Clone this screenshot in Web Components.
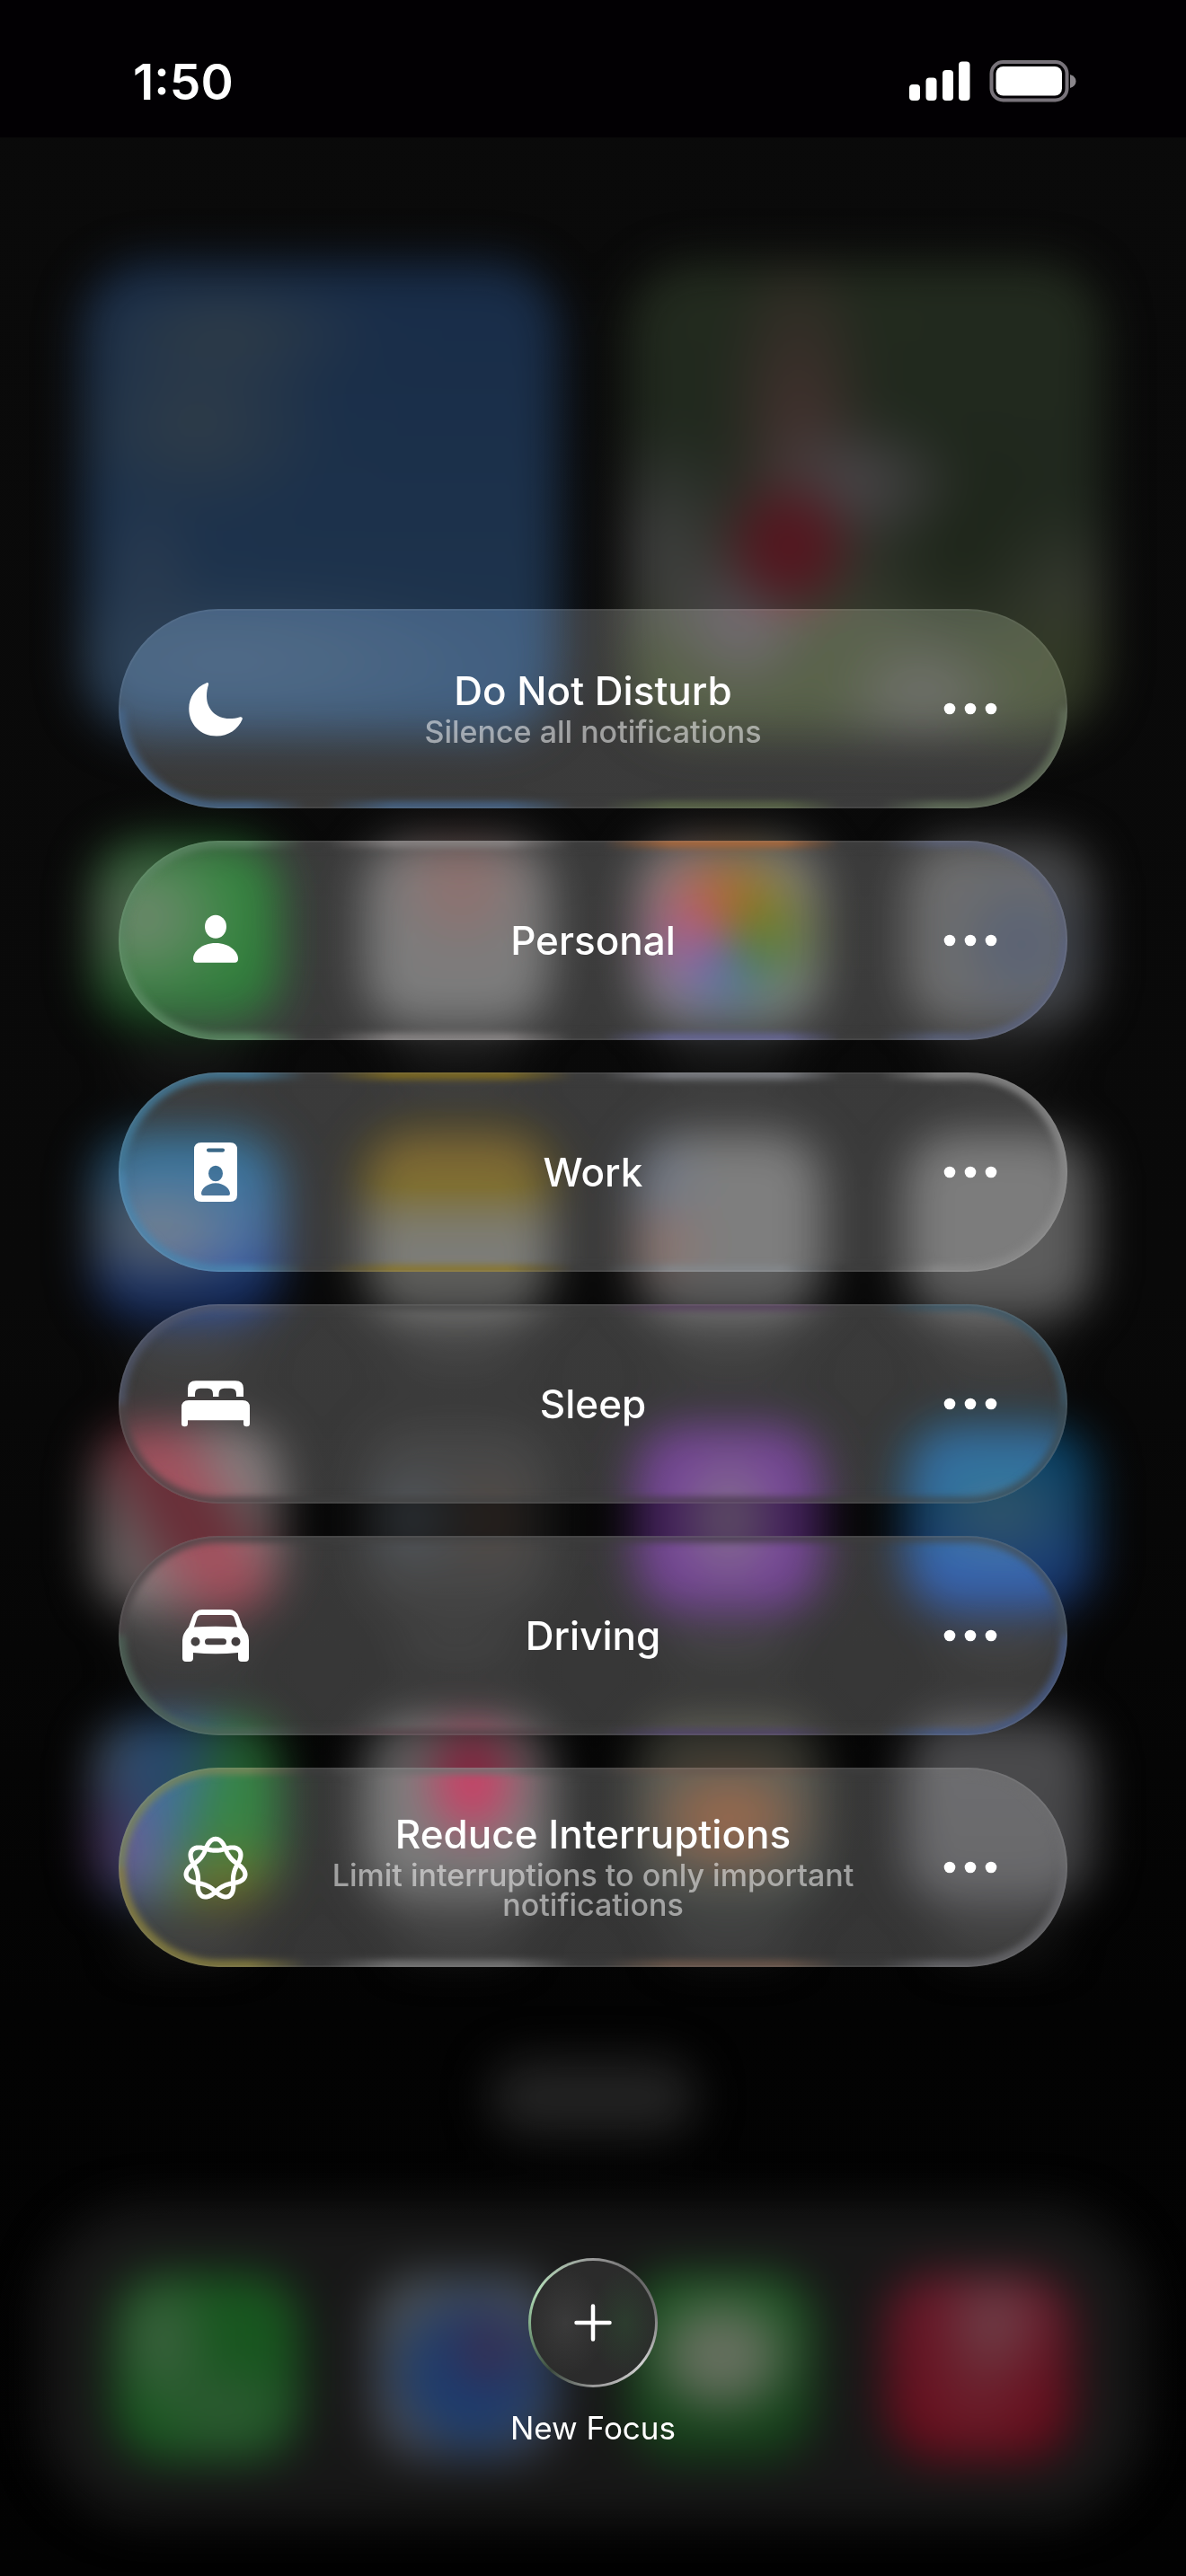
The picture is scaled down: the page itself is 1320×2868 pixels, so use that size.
<!DOCTYPE html>
<html lang="en">
<head>
<meta charset="utf-8">
<meta name="viewport" content="width=device-width, initial-scale=1">
<title>Focus</title>
<style>
  :root {
    --font: Inter, "Liberation Sans", sans-serif;
    --ink: #fff;
    --muted: rgba(255, 255, 255, 0.52);
    --bar: #020003;
    --inset: 10%;
  }
  * { box-sizing: border-box; }
  body {
    margin: 0; color: var(--ink); font-family: var(--font);
    background: linear-gradient(#0a0a0a 0, #090909 50%, #030303 78%, #020202 100%);
  }
</style>
</head>
<body>
<focus-screen>
  <home-backdrop slot="backdrop"></home-backdrop>
  <status-bar slot="status" time="1:50"></status-bar>
  <focus-mode icon="moon" label="Do Not Disturb" rim="dnd">Silence all notifications</focus-mode>
  <focus-mode icon="person" label="Personal" rim="personal"></focus-mode>
  <focus-mode icon="badge" label="Work" rim="work"></focus-mode>
  <focus-mode icon="bed" label="Sleep" rim="sleep"></focus-mode>
  <focus-mode icon="car" label="Driving" rim="driving"></focus-mode>
  <focus-mode icon="knot" label="Reduce Interruptions" rim="reduce">Limit interruptions to only important notifications</focus-mode>
  <new-focus slot="footer">New Focus</new-focus>
</focus-screen>

<script>
// All icons share one 84x84 box with the origin in the middle.
const ICONS = {
  moon: `<path d="M-10.5-28.6C-8.6-29.6-7.4-28.6-8-26.5C-9.2-23-10-19-10-14C-10 1 1 11 15 11C20 11 23 10.4 26.5 9.4C29 8.7 30.4 10 29.6 12C25 23 14 30.5 1 30.5C-17 30.5-29.7 17.5-29.7 0C-29.7-13-22-24-10.5-28.6Z"/>`,
  person: `<ellipse cy="-15.3" rx="12" ry="13"/><path d="M-21 24.7C-24 24.7-25 23-25 20.5C-25 13-16 3 0 3C16 3 25 13 25 20.5C25 23 24 24.7 21 24.7Z"/>`,
  badge: `<path fill-rule="evenodd" d="M-16-33H16Q24-33 24-25V25Q24 33 16 33H-16Q-24 33-24 25V-25Q-24-33-16-33ZM-8-26.5A2 2 0 0 0-8-22.3H8A2 2 0 0 0 8-26.5ZM0-7.2A8 8.7 0 1 0 0 10.2A8 8.7 0 1 0 0-7.2ZM-14 26H14Q16 26 16 24C16 19 10 12.3 0 12.3C-10 12.3-16 19-16 24Q-16 26-14 26Z"/>`,
  bed: `<path d="M-31-8V-17Q-31-25.7-22-25.7H22Q31-25.7 31-17V-8H23V-11Q23-17.3 17-17.3H9.5Q3.5-17.3 3.5-11V-8H-3V-11Q-3-17.3-9-17.3H-17Q-23-17.3-23-11V-8Z"/><path d="M-38 4Q-38-4-30-4H30Q38-4 38 4V22Q38 25.3 34.5 25.3Q31 25.3 31 22V18.3H-31V22Q-31 25.3-34.5 25.3Q-38 25.3-38 22Z"/>`,
  car: `<path fill-rule="evenodd" d="M-30-9.5L-26-20.5Q-23-29-15-29H15Q23-29 26-20.5L30-9.5Q37-2 37 5V25Q37 29 33 29H29Q25 29 25 25V19Q0 21.5-25 19V25Q-25 29-29 29H-33Q-37 29-37 25V5Q-37-2-30-9.5ZM-24-9.5Q0-11 24-9.5L21-19Q20-23 16-23H-16Q-20-23-21-19ZM-22.5 1.7A5 5 0 1 0-22.5 11.7A5 5 0 1 0-22.5 1.7ZM22.5 1.7A5 5 0 1 0 22.5 11.7A5 5 0 1 0 22.5 1.7ZM-8.5 3.2A3.5 3.5 0 0 0-8.5 10.2H8.5A3.5 3.5 0 0 0 8.5 3.2Z"/>`,
  knot: `<path fill="none" stroke="currentColor" stroke-width="5.2" stroke-linejoin="round" d="${knot(26.2, 6.4, 1, 2)}"/>`,
};

// Seven-lobed knot: the radius swings 7 times while the pen goes round twice.
function knot(radius, swing, pinch, cy) {
  const points = [];
  for (let i = 0; i < 280; i++) {
    const a = (i / 280) * Math.PI * 4;
    const r = radius + swing * Math.cos(3.5 * a) + pinch * Math.cos(7 * a);
    points.push(`${(r * Math.sin(a)).toFixed(2)} ${(cy - r * Math.cos(a)).toFixed(2)}`);
  }
  return `M${points.join("L")}Z`;
}

// Light bent round the edge of each glass card: [top, bottom], four icon columns each.
const RIMS = {
  dnd: [null, ["#46678c", "#46678c", "#5c6a48", "#62705a"]],
  personal: [["#5b8663", "#8a8686", "#b06a3a", "#5c6278"], ["#5a8a62", "#8e8a8a", "#6a6a9c", "#5c6480"]],
  work: [["#437c9c", "#86701e", "#84868c", "#8c8c8c"], ["#4a86ae", "#8a7628", "#84888c", "#8a8a8a"]],
  sleep: [["#50566a", "#484848", "#55405c", "#3c5868"], ["#4c4446", "#444", "#4c3c52", "#3c4e58"]],
  driving: [["#4c4648", "#444", "#483e4e", "#44505c"], ["#4e6458", "#55444a", "#50446a", "#465a86"]],
  reduce: [["#7a865a", "#707070", "#6a5a50", "#6c6c6e"], ["#8a8240", "#7c7c7c", "#705a4c", "#68686c"]],
};

function band(colors) {
  if (!colors) return "linear-gradient(transparent, transparent)";
  const [a, b, c, d] = colors;
  const glass = "#3d3d3d";
  return `linear-gradient(90deg, ${a} 14%, ${glass} 20% 22%, ${b} 29% 41%, ${glass} 48% 51%, ${c} 58% 70%, ${glass} 76% 80%, ${d} 86%)`;
}

function mount(el, html) {
  el.attachShadow({ mode: "open" }).innerHTML = `<style>*, *::before, *::after { box-sizing: border-box; }</style>${html}`;
}

class FocusScreen extends HTMLElement {
  connectedCallback() {
    mount(this, `
      <style>
        :host { display: flex; flex-direction: column; min-height: 100vh; position: relative; overflow: hidden; }
        main {
          display: flex; flex-direction: column; gap: 36px;
          padding: 525px var(--inset) 0;
        }
        footer { display: flex; justify-content: center; margin-top: auto; padding: 48px 0 140px; }
      </style>
      <slot name="backdrop"></slot>
      <slot name="status"></slot>
      <main><slot></slot></main>
      <footer><slot name="footer"></slot></footer>
    `);
  }
}

class StatusBar extends HTMLElement {
  connectedCallback() {
    mount(this, `
      <style>
        :host {
          display: flex; align-items: center; justify-content: space-between;
          height: 153px; padding: 28px 122px 0 148px;
          background: var(--bar); position: relative;
        }
        time { font-size: 55px; line-height: 64px; font-weight: 600; }
        svg { display: block; }
      </style>
      <time>${this.getAttribute("time")}</time>
      <svg width="186" height="48" viewBox="0 0 186 48" role="img" aria-label="Full signal, battery full">
        <g fill="#fff">
          <rect y="27" width="12" height="18" rx="4"/>
          <rect x="18.5" y="19.5" width="12" height="25.5" rx="4"/>
          <rect x="37" y="11" width="12" height="34" rx="4"/>
          <rect x="55" y="1.5" width="12.5" height="43.5" rx="4"/>
          <rect x="96.5" y="7" width="73.5" height="32.5" rx="8"/>
        </g>
        <rect x="91.5" y="2" width="84" height="42.5" rx="13" fill="none" stroke="#78737a" stroke-width="4"/>
        <path d="M179 16Q185.5 18 185.5 23.5Q185.5 29 179 31Z" fill="#8a868c"/>
      </svg>
    `);
  }
}

// The home screen seen out of focus behind the list. Purely decorative.
class HomeBackdrop extends HTMLElement {
  connectedCallback() {
    this.setAttribute("aria-hidden", "true");
    mount(this, `
      <style>
        :host { display: block; position: absolute; inset: 0; filter: blur(25px); }
        .page { padding: 292px 104px 0; }
        .widgets, .row, .dock { display: flex; justify-content: space-between; }
        .widgets { margin: 0 -12px; gap: 76px; }
        .widgets div { flex: 1; height: 527px; border-radius: 76px; }
        .row { margin-top: 116px; height: 286px; }
        .row + .row { margin-top: 40px; }
        .app::after {
          content: ""; display: block; width: 130px; height: 30px;
          margin: 24px auto 0; border-radius: 15px; background: #1c1c1c;
        }
        .app i, .dock i { display: block; width: 208px; height: 208px; border-radius: 56px; }
        .weather {
          background:
            radial-gradient(180px 70px at 30% 15%, #303d48, transparent),
            radial-gradient(160px 110px at 24% 34%, #303d48, transparent),
            radial-gradient(60px 100px at 14% 66%, #2c3c50, transparent),
            radial-gradient(340px 90px at 30% 84%, #33465a, transparent),
            linear-gradient(#182c48, #20364e);
        }
        .photo {
          background:
            radial-gradient(84px 84px at 34% 60%, #54161f 40%, transparent),
            radial-gradient(130px 80px at 48% 47%, #4c484c, transparent),
            radial-gradient(90px 230px at 36% 36%, #463230, transparent),
            radial-gradient(90px 90px at 24% 76%, #504a52, transparent),
            radial-gradient(110px 90px at 62% 92%, #50504e, transparent),
            radial-gradient(150px 140px at 2% 60%, #404040, transparent),
            radial-gradient(120px 160px at 70% 60%, #1c2418, transparent),
            linear-gradient(#222a1e 0, #20281e 50%, #363a30 70%, #323926 82%, #303726);
        }
        .facetime { background: radial-gradient(120px 100px at 26% 42%, #5c6a5a, transparent), linear-gradient(#1f5a27, #1c5824 70%, #184420); }
        .calendar { background: radial-gradient(80px 90px at 52% 22%, #6a4e4c, transparent), #5c5c5c; }
        .photos {
          background:
            radial-gradient(circle, transparent 50px, #606060 108px),
            conic-gradient(#7c4c18, #5c5812 55deg, #3a5818 105deg, #305450 150deg, #385078 190deg, #5a4478 225deg, #7c3c60 270deg, #883c38 315deg, #7c4c18);
        }
        .camera { background: radial-gradient(90px 96px at 62% 56%, #303848, transparent), #4a4a4a; }
        .mail { background: radial-gradient(120px 74px at 36% 54%, #60666c, transparent), linear-gradient(#20506a, #2a4a70 50%, #162f66 75%, #122a60); }
        .notes { background: linear-gradient(#544408 26%, #5c5c56 46%, #5e5e5e); }
        .reminders { background: radial-gradient(50px 60px at 14% 26%, #4e5664, transparent), radial-gradient(50px 50px at 16% 58%, #6c504a, transparent), #5e5e5e; }
        .contacts { background: #5c5c5c; }
        .news { background: linear-gradient(60deg, transparent 22%, #6a2c36 45% 58%, transparent 78%), #646060; }
        .stocks { background: radial-gradient(60px 60px at 25% 50%, #30363c, transparent), radial-gradient(50px 50px at 68% 50%, #30241e, transparent), #1a1a1a; }
        .podcasts { background: radial-gradient(64px 90px at 50% 50%, #665a68, transparent), #42205a; }
        .store { background: radial-gradient(100px 70px at 50% 46%, #385a6a, transparent), linear-gradient(#08466a, #0e3e66 45%, #1a3e76 70%, #18346c); }
        .maps {
          background:
            radial-gradient(100px 70px at 72% 94%, #544614, transparent),
            radial-gradient(80px 90px at 6% 70%, #4e305a, transparent),
            linear-gradient(105deg, #4c5460 8%, #28486c 22% 42%, #225c2c 62%, #245c2e);
        }
        .health { background: radial-gradient(60px 76px at 58% 34%, #86203c 45%, transparent), linear-gradient(#5e5e5e 60%, #4c4c4c); }
        .home { background: radial-gradient(100px 66px at 50% 54%, #6a4834 35%, transparent), linear-gradient(#3c3c34, #262a28); }
        .settings { background: linear-gradient(#4c4c4e, #424244); }
        .search { width: 230px; height: 84px; margin: 94px auto 0; border-radius: 42px; background: #222; }
        .dock { margin: 78px 46px 0; padding: 76px 80px 0; height: 352px; border-radius: 120px; background: #171717; }
        .phone { background: radial-gradient(60px 90px at 26% 36%, #446446, transparent), radial-gradient(100px 60px at 60% 74%, #325a36, transparent), #18561f; }
        .safari { background: radial-gradient(60px 60px at 62% 42%, #402a48, transparent), radial-gradient(circle at 55% 54%, #1a3c70 55px, transparent 105px), linear-gradient(#4a5054, #44464c); }
        .messages { background: radial-gradient(90px 76px at 50% 44%, #66705f 45%, transparent), linear-gradient(#205a26, #143c18); }
        .music { background: radial-gradient(70px 70px at 58% 26%, #704850, transparent), radial-gradient(80px 90px at 50% 60%, #6c2430, transparent), linear-gradient(#661a2a, #640a18); }
      </style>
      <div class="page">
        <div class="widgets"><div class="weather"></div><div class="photo"></div></div>
        ${this.row("facetime", "calendar", "photos", "camera")}
        ${this.row("mail", "notes", "reminders", "contacts")}
        ${this.row("news", "stocks", "podcasts", "store")}
        ${this.row("maps", "health", "home", "settings")}
      </div>
      <div class="search"></div>
      <div class="dock"><i class="phone"></i><i class="safari"></i><i class="messages"></i><i class="music"></i></div>
    `);
  }

  row(...apps) {
    return `<div class="row">${apps.map((a) => `<div class="app"><i class="${a}"></i></div>`).join("")}</div>`;
  }
}

class FocusMode extends HTMLElement {
  connectedCallback() {
    const label = this.getAttribute("label");
    const [top, bottom] = RIMS[this.getAttribute("rim")];
    mount(this, `
      <style>
        :host {
          display: grid; grid-template-columns: 1fr 216px; height: 222px;
          position: relative; border-radius: 111px;
          background: rgba(255, 255, 255, 0.2);
          backdrop-filter: saturate(1.7);
        }
        .rim { position: absolute; inset: 0; border-radius: inherit; overflow: hidden; pointer-events: none; }
        .rim::after { content: ""; position: absolute; inset: 0; border-radius: inherit; box-shadow: inset 0 0 0 2px rgba(255, 255, 255, 0.05); }
        .soft { position: absolute; inset: -3px; filter: blur(4px); }
        .ring {
          height: 100%; border: 10px solid transparent; border-radius: 114px;
          background:
            ${band(top)} top / 100% 50% no-repeat border-box,
            ${band(bottom)} bottom / 100% 50% no-repeat border-box;
          mask: linear-gradient(#000 0 0) padding-box exclude, linear-gradient(#000 0 0) border-box;
        }
        button { margin: 0; padding: 0; border: 0; background: none; color: inherit; font: inherit; cursor: pointer; border-radius: 111px; position: relative; }
        .mode { display: grid; grid-template-columns: 216px 1fr; align-items: center; }
        svg { display: block; margin: auto; fill: currentColor; }
        .text { display: flex; flex-direction: column; gap: 8px; text-align: center; }
        .label { font-size: 44px; line-height: 42px; font-weight: 500; }
        .note { font-size: 34px; line-height: 33px; font-weight: 500; color: var(--muted); }
        .note.empty { display: none; }
        :focus-visible { outline: 3px solid #fff; }
      </style>
      <div class="rim"><div class="soft"><div class="ring"></div></div></div>
      <button class="mode" type="button">
        <svg width="84" height="84" viewBox="-42 -42 84 84" aria-hidden="true">${ICONS[this.getAttribute("icon")]}</svg>
        <span class="text">
          <span class="label">${label}</span>
          <span class="note${this.textContent.trim() ? "" : " empty"}"><slot></slot></span>
        </span>
      </button>
      <button class="more" type="button" aria-label="${label} options">
        <svg width="60" height="14" viewBox="-30 -7 60 14" aria-hidden="true"><circle cx="-23" r="6.3"/><circle r="6.3"/><circle cx="23" r="6.3"/></svg>
      </button>
    `);
  }
}

class NewFocus extends HTMLElement {
  connectedCallback() {
    mount(this, `
      <style>
        :host { display: block; position: relative; }
        button {
          display: flex; flex-direction: column; align-items: center; gap: 20px;
          padding: 0; border: 0; background: none; color: inherit; cursor: pointer;
          font: 400 35px/50px var(--font);
        }
        .disc {
          display: grid; place-items: center; width: 144px; height: 144px; border-radius: 50%;
          border: 3px solid transparent;
          background:
            radial-gradient(46px 60px at 28% 50%, #3a3a3a, transparent) padding-box,
            radial-gradient(40px 60px at 76% 50%, #2c3c2e, transparent) padding-box,
            linear-gradient(#2b2b2b, #2b2b2b) padding-box,
            conic-gradient(#999, #666 45deg, #777 80deg, #d0d0d0 130deg, #999 180deg, #3c4a3e 222deg, #7ea884 265deg, #b4dcb8 300deg, #999) border-box;
        }
      </style>
      <button type="button">
        <span class="disc">
          <svg width="42" height="42" viewBox="0 0 42 42" fill="none" stroke="#fff" stroke-width="4.5" stroke-linecap="round" aria-hidden="true"><path d="M21 2.5V39.5M2.5 21H39.5"/></svg>
        </span>
        <slot></slot>
      </button>
    `);
  }
}

customElements.define("focus-screen", FocusScreen);
customElements.define("status-bar", StatusBar);
customElements.define("home-backdrop", HomeBackdrop);
customElements.define("focus-mode", FocusMode);
customElements.define("new-focus", NewFocus);
</script>
</body>
</html>
